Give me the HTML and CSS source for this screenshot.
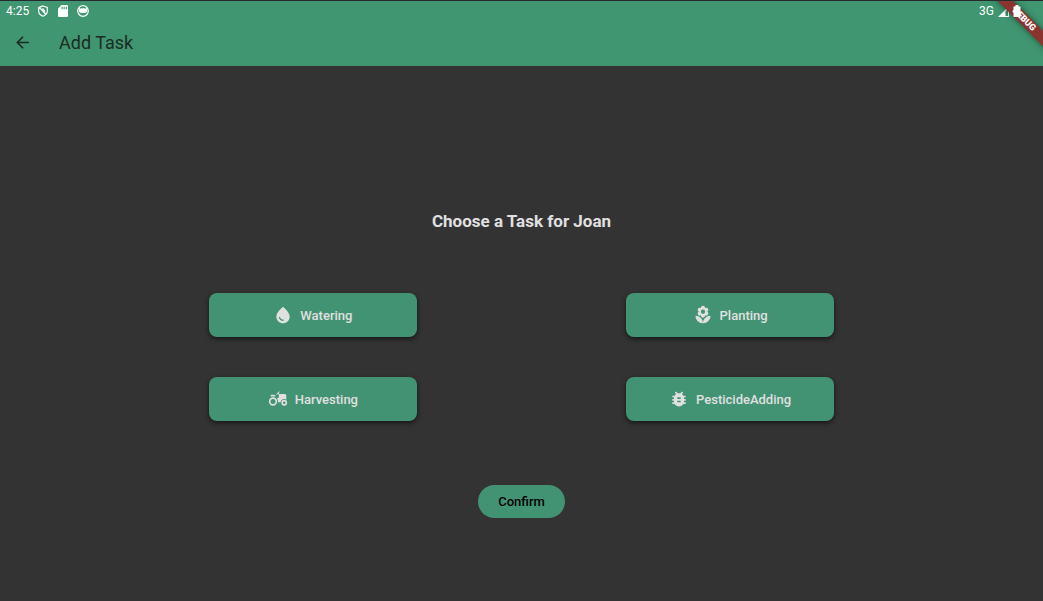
FILE: index.html
```html
<!DOCTYPE html>
<html lang="en">
<head>
<meta charset="utf-8">
<meta name="viewport" content="width=device-width, initial-scale=1">
<title>Add Task</title>
<link rel="stylesheet" href="styles.css">
</head>
<body>
<header class="top">
  <div class="status">
    <div class="status-group">
      <span class="clock">4:25</span>
      <svg class="status-icon" viewBox="0 0 12 12" fill="none" stroke="#fff" stroke-width="1.200"><path d="M6 1 10.300 2.500V6C10.300 8.500 8.700 10.300 6 11.200 3.300 10.300 1.700 8.500 1.700 6V2.500ZM2.500 2.500 9 9.500M5.500 3.500 8 6.500"/></svg>
      <svg class="status-icon" viewBox="0 0 12 12" fill="#fff" fill-rule="evenodd"><path d="M4.500 0H10Q11 0 11 1V11Q11 12 10 12H2Q1 12 1 11V3.500ZM4.500 1.800V4.200H5.600V1.800ZM6.600 1.800V4.200H7.700V1.800ZM8.700 1.800V4.200H9.800V1.800Z"/></svg>
      <svg class="status-icon" viewBox="0 0 12 12"><circle cx="6" cy="6" r="5.300" fill="none" stroke="#fff" stroke-width="1.200"/><path d="M1.500 4 2.500 2.800 3.500 3.700 4.500 3.200H7.500L8.500 3.700 9.500 2.800 10.500 4 10 7 8 8H4L2 7Z" fill="#fff"/></svg>
    </div>
    <div class="status-group status-right">
      <span class="network">3G</span>
      <svg class="signal" viewBox="0 0 11 11"><path d="M11 0V11H0Z" fill="#fff"/><path d="M7.500 5.500 10 3V10H7.500Z" fill="#3f9670"/></svg>
      <svg class="battery" viewBox="0 0 8 12"><path d="M2.500 0H5.500V1.500H7.500V12H.5V1.500H2.500Z" fill="#fff"/></svg>
    </div>
  </div>
  <div class="appbar">
    <button class="back" type="button" aria-label="Back"><svg viewBox="0 0 24 24" fill="#1d2b25"><path d="M20 11H7.830l5.590-5.590L12 4l-8 8 8 8 1.410-1.410L7.830 13H20z"/></svg></button>
    <h1 class="title">Add Task</h1>
  </div>
  <div class="corner"><span class="ribbon">DEBUG</span></div>
</header>
<main class="content">
  <h2 class="prompt">Choose a Task for Joan</h2>
  <div class="tasks">
    <button class="task" type="button"><svg viewBox="0 0 24 24"><path d="M12 2c-5.330 4.550-8 8.480-8 11.800 0 4.980 3.800 8.200 8 8.200s8-3.220 8-8.200c0-3.320-2.670-7.250-8-11.800zM7.830 14c.37 0 .67.26.74.62.41 2.220 2.280 2.980 3.640 2.870.43-.02.79.32.79.75 0 .4-.32.73-.72.75-2.130.13-4.620-1.090-5.190-4.120-.08-.45.28-.87.74-.87z"/></svg>Watering</button>
    <button class="task" type="button"><svg viewBox="0 0 24 24"><path d="M12 22c4.970 0 9-4.030 9-9-4.970 0-9 4.030-9 9zM5.600 10.250c0 1.380 1.120 2.500 2.500 2.500.53 0 1.010-.16 1.420-.44l-.02.19c0 1.380 1.120 2.500 2.500 2.500s2.500-1.120 2.500-2.500l-.02-.19c.4.28.89.44 1.420.44 1.380 0 2.500-1.120 2.500-2.500 0-1-.59-1.850-1.430-2.250.84-.4 1.430-1.250 1.430-2.250 0-1.380-1.120-2.500-2.500-2.500-.53 0-1.010.16-1.420.44l.02-.19C14.500 2.120 13.380 1 12 1S9.500 2.120 9.500 3.500l.02.19c-.4-.28-.89-.44-1.420-.44-1.380 0-2.500 1.120-2.500 2.500 0 1 .59 1.850 1.430 2.250-.84.4-1.430 1.250-1.430 2.250zM12 5.500c1.380 0 2.500 1.120 2.500 2.500s-1.120 2.500-2.500 2.500S9.500 9.380 9.500 8s1.120-2.500 2.500-2.500zM3 13c0 4.970 4.030 9 9 9 0-4.970-4.030-9-9-9z"/></svg>Planting</button>
    <button class="task" type="button"><svg viewBox="0 0 24 24"><path d="M19.500 12c.93 0 1.780.28 2.500.76V8c0-1.100-.9-2-2-2h-6.290l-1.060-1.060 1.410-1.410-.71-.71-3.530 3.530.71.71 1.410-1.410L13 6.710V9c0 1.100-.9 2-2 2h-.54c.95 1.060 1.540 2.460 1.540 4 0 .34-.04.67-.09 1h3.140c.25-2.250 2.140-4 4.450-4z"/><path d="M4 9h5c0-1.100-.9-2-2-2H4c-.55 0-1 .45-1 1s.45 1 1 1z"/><circle class="wheel" cx="6" cy="15" r="4"/><circle class="wheel" cx="19.500" cy="16.500" r="2.500"/></svg>Harvesting</button>
    <button class="task" type="button"><svg viewBox="0 0 24 24"><path d="M20 8h-2.810c-.45-.78-1.070-1.450-1.820-1.960L17 4.410 15.590 3l-2.170 2.170C12.960 5.060 12.490 5 12 5c-.49 0-.96.06-1.410.17L8.410 3 7 4.410l1.620 1.630C7.880 6.550 7.260 7.220 6.810 8H4v2h2.090c-.05.33-.09.66-.09 1v1H4v2h2v1c0 .34.04.67.09 1H4v2h2.810c1.040 1.790 2.970 3 5.190 3s4.150-1.210 5.190-3H20v-2h-2.090c.05-.33.09-.66.09-1v-1h2v-2h-2v-1c0-.34-.04-.67-.09-1H20V8zm-6 8h-4v-2h4v2zm0-4h-4v-2h4v2z"/></svg>PesticideAdding</button>
  </div>
  <button class="confirm" type="button">Confirm</button>
</main>
</body>
</html>
```
FILE: styles.css
```css
* { box-sizing: border-box; }
body {
  margin: 0;
  min-height: 100vh;
  display: flex;
  flex-direction: column;
  background: #333;
  color: #e0e0e0;
  font-family: Roboto, "Liberation Sans", sans-serif;
}
h1, h2 { margin: 0; }
button { border: 0; font: inherit; cursor: pointer; }
svg { display: block; flex: none; }

.top {
  position: relative;
  background: #3f9670;
  border-top: 1px solid #252b2c;
}
.status {
  display: flex;
  justify-content: space-between;
  height: 20px;
  padding: 0 22px 0 6px;
  color: #fff;
  font-size: 12px;
}
.status-group { display: flex; align-items: center; gap: 8px; }
.status-right { gap: 4px; }
.status-icon { width: 12px; height: 12px; }
.signal { width: 11px; height: 11px; }
.battery { width: 8px; height: 12px; position: relative; z-index: 2; }

.appbar {
  display: flex;
  align-items: center;
  gap: 20px;
  height: 45px;
  padding: 0 6px 2px;
}
.back { padding: 7px; background: none; }
.back svg { width: 19px; height: 19px; }
.title { color: #1d2b25; font-size: 18px; font-weight: 400; }

.corner {
  position: absolute;
  top: 0;
  right: 0;
  width: 60px;
  height: 60px;
  overflow: hidden;
}
.ribbon {
  position: absolute;
  top: 13px;
  left: -9px;
  width: 100px;
  background: #8a3430;
  box-shadow: 0 0 6px rgba(0, 0, 0, .5);
  color: #fff;
  font-size: 9px;
  font-weight: 900;
  line-height: 11px;
  text-align: center;
  transform: rotate(45deg);
}

.content {
  flex: 1;
  display: flex;
  flex-direction: column;
  align-items: center;
  justify-content: center;
  padding-top: 62px;
}
.prompt { font-size: 17px; font-weight: 700; line-height: 20px; }
.tasks {
  width: 60%;
  margin: 62px 0 64px;
  display: grid;
  grid-template-columns: 1fr 1fr;
  column-gap: 33.333%;
  row-gap: 40px;
}
.task {
  display: flex;
  align-items: center;
  justify-content: center;
  gap: 7px;
  height: 44px;
  border-radius: 8px;
  background: #429373;
  box-shadow: 0 2px 5px rgba(0, 0, 0, .6);
  color: #e0e0e0;
  font-size: 13px;
  font-weight: 500;
}
.task svg { width: 20px; height: 20px; fill: #e0e0e0; }
.task .wheel { fill: none; stroke: #e0e0e0; stroke-width: 2; }
.confirm {
  height: 33px;
  padding: 0 20px;
  border-radius: 17px;
  background: #429373;
  color: #000;
  font-size: 13px;
  font-weight: 500;
}
```
